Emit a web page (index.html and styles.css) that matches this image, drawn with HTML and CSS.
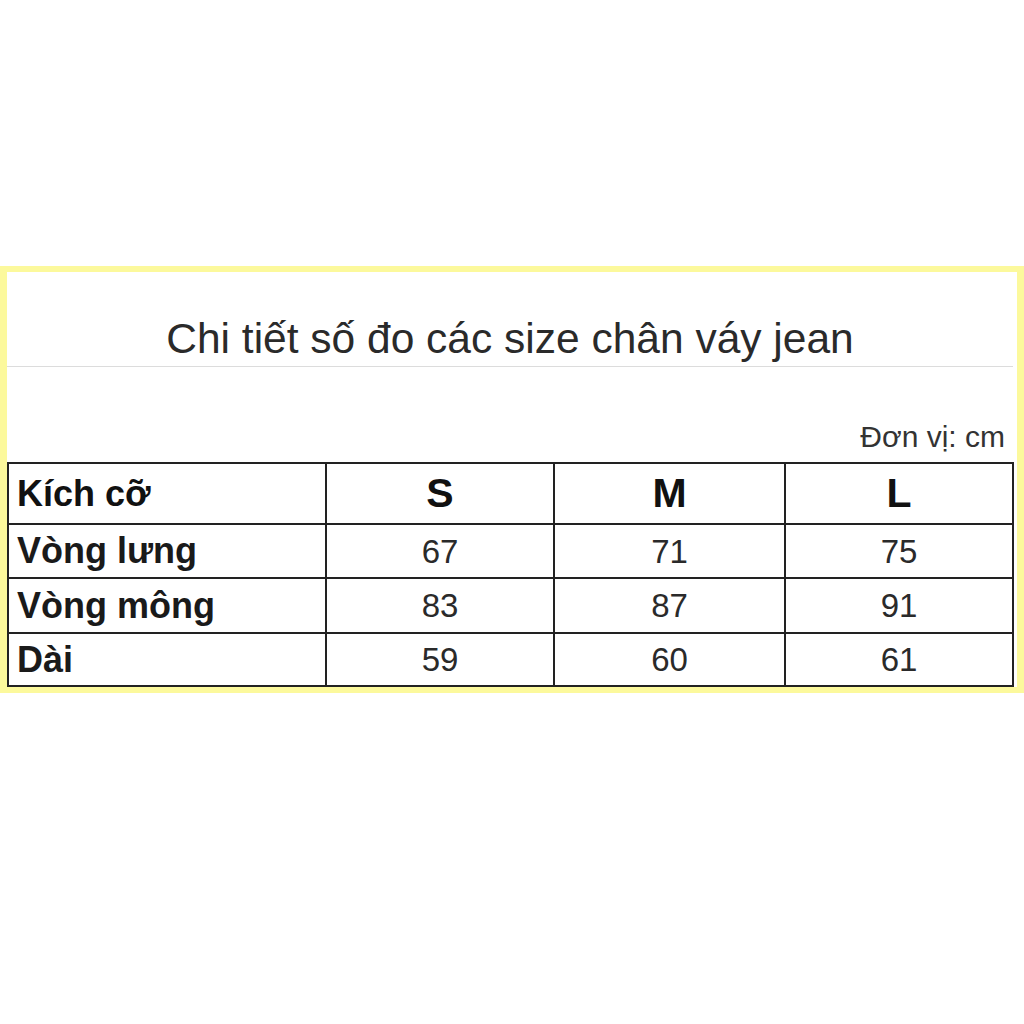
FILE: index.html
```html
<!DOCTYPE html>
<html lang="vi">
<head>
<meta charset="utf-8">
<title>Chi tiết số đo</title>
<link rel="stylesheet" href="styles.css">
</head>
<body>
<div class="frame">
  <div class="title-row">Chi tiết số đo các size chân váy jean</div>
  <div class="unit-row">Đơn vị: cm</div>
  <table class="sizes">
    <colgroup>
      <col class="c-label"><col class="c-s"><col class="c-m"><col class="c-l">
    </colgroup>
    <tr class="head">
      <td class="label">Kích cỡ</td><td>S</td><td>M</td><td>L</td>
    </tr>
    <tr class="r1">
      <td class="label">Vòng lưng</td><td>67</td><td>71</td><td>75</td>
    </tr>
    <tr class="r2">
      <td class="label">Vòng mông</td><td>83</td><td>87</td><td>91</td>
    </tr>
    <tr class="r3">
      <td class="label">Dài</td><td>59</td><td>60</td><td>61</td>
    </tr>
  </table>
</div>
</body>
</html>
```
FILE: styles.css
```css
html, body {
  margin: 0;
  padding: 0;
  background: #ffffff;
}
body {
  font-family: "Liberation Sans", Arial, sans-serif;
  color: #1e1e1e;
}
.frame {
  margin-top: 266px;
  border-style: solid;
  border-color: #fcf99c;
  border-width: 6px 7px 6px 7px;
  background: #ffffff;
}
.title-row {
  height: 42px;
  padding-top: 46px;
  padding-bottom: 6px;
  margin-right: 4px;
  font-size: 42.5px;
  line-height: 42px;
  text-align: center;
  color: #2a2a2a;
  border-bottom: 1px solid #dcdcdc;
}
.unit-row {
  height: 30px;
  padding-top: 55px;
  padding-bottom: 10px;
  padding-right: 12px;
  font-size: 30px;
  line-height: 30px;
  text-align: right;
  color: #333333;
}
.sizes {
  width: 1005px;
  border-collapse: collapse;
  table-layout: fixed;
}
.c-label { width: 318px; }
.c-s { width: 228px; }
.c-m { width: 231px; }
.c-l { width: 228px; }
.sizes td {
  border: 2px solid #222222;
  padding: 0;
  text-align: center;
  font-size: 33px;
  line-height: 1;
  color: #2a2a2a;
}
.sizes td.label {
  text-align: left;
  padding-left: 8px;
  font-weight: bold;
  font-size: 36px;
  color: #1a1a1a;
}
.sizes tr.head td {
  height: 59px;
  font-weight: bold;
  font-size: 41px;
  color: #111111;
}
.sizes tr.head td.label {
  font-size: 36px;
}
.sizes tr.r1 td { height: 52px; }
.sizes tr.r2 td { height: 53px; }
.sizes tr.r3 td { height: 51px; }
```
